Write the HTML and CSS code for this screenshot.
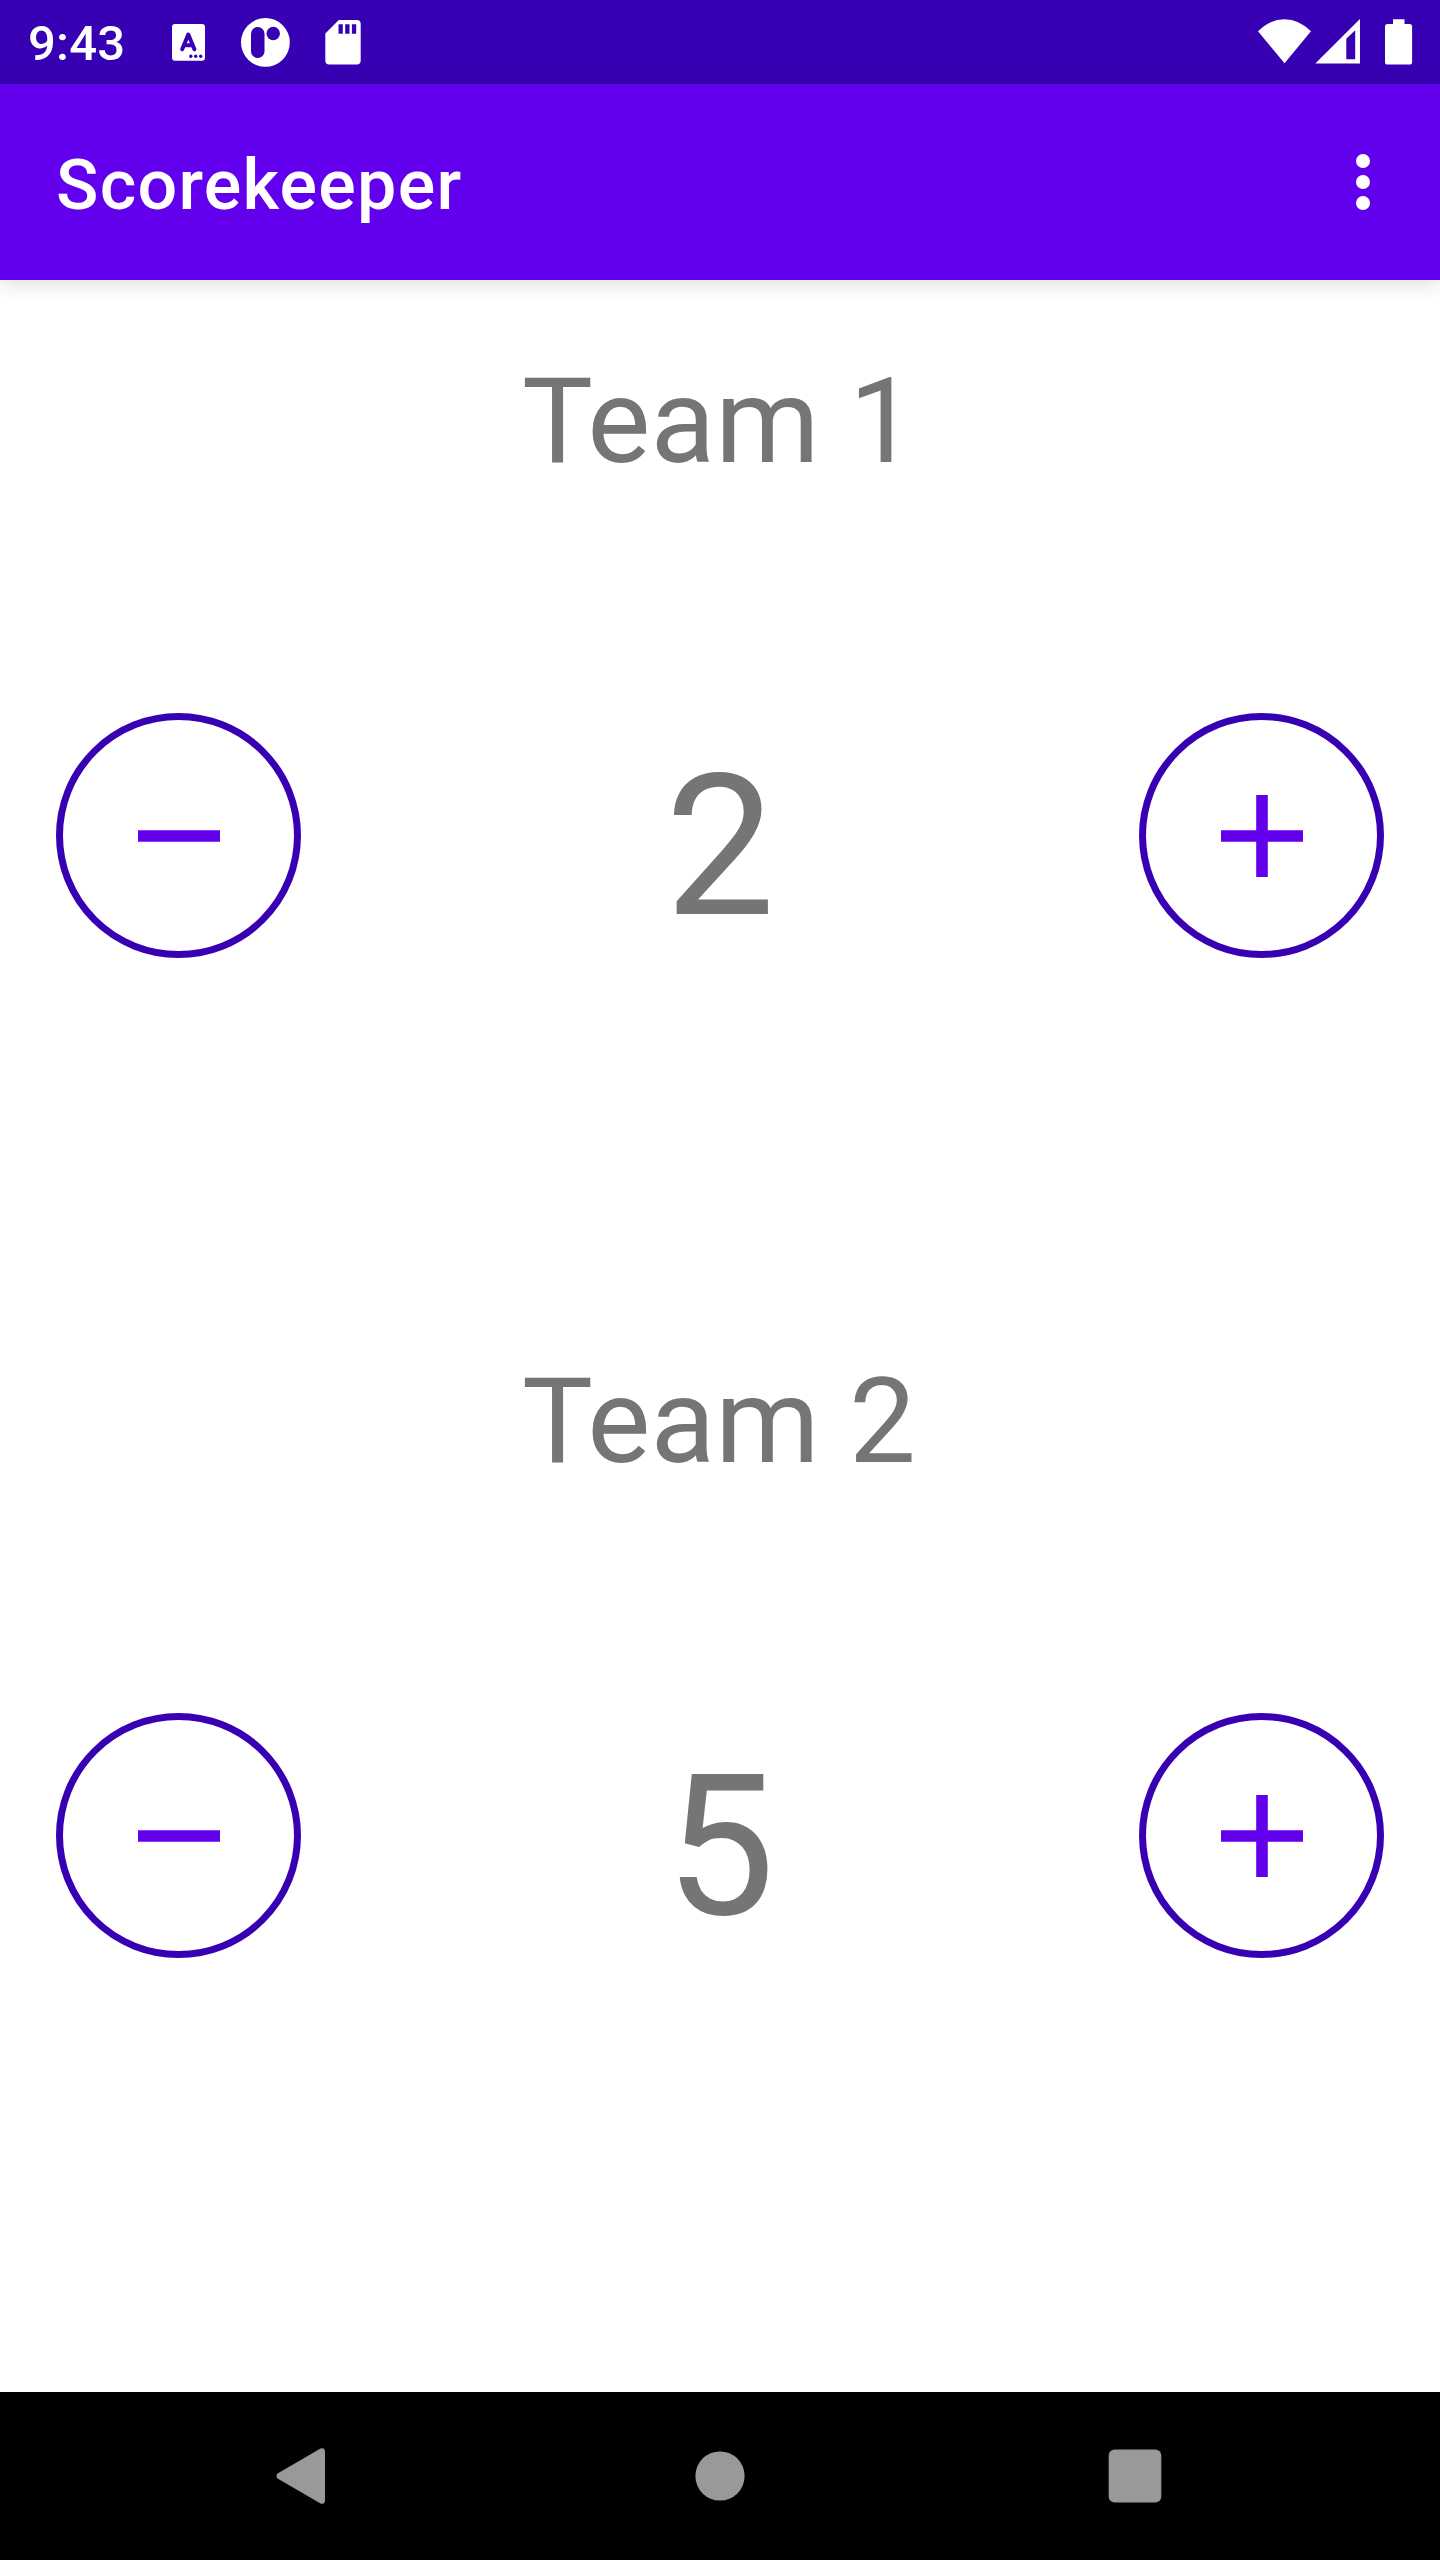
FILE: index.html
```html
<!DOCTYPE html>
<html lang="en">
<head>
<meta charset="utf-8">
<title>Scorekeeper</title>
<link rel="stylesheet" href="styles.css">
</head>
<body>
<div class="screen">
  <div class="status-bar">
    <span class="clock">9:43</span>
    <div class="notifications">
      <svg width="34" height="38" viewBox="171 23 34 38">
        <rect x="172" y="24" width="33" height="36.7" rx="3" fill="#fff"/>
        <path d="M182.2 49.3L188.3 34.5L194.4 49.3M184.5 45.2h7.6" fill="none" stroke="#3700b3" stroke-width="4" stroke-linecap="round" stroke-linejoin="round"/>
        <g fill="#3700b3"><circle cx="190.8" cy="56.3" r="1.7"/><circle cx="195.7" cy="56.3" r="1.7"/><circle cx="200.7" cy="56.3" r="1.7"/></g>
      </svg>
      <svg width="50" height="50" viewBox="240 17 50 50">
        <circle cx="265.4" cy="42.4" r="24.4" fill="#fff"/>
        <rect x="251" y="27" width="13.5" height="31" rx="6.7" fill="#3700b3"/>
        <circle cx="273.2" cy="33.5" r="6.7" fill="#3700b3"/>
      </svg>
      <svg width="36" height="46" viewBox="324.5 19 36 46">
        <path d="M338.3 20H356.2a4 4 0 0 1 4 4V60.6a4 4 0 0 1-4 4H328.8a4 4 0 0 1-4-4V33.5Z" fill="#fff"/>
        <path d="M338 24.3h4.3v9.5H338ZM344.7 24.3h4.3v9.5h-4.3ZM351.4 24.3h4.3v9.5h-4.3Z" fill="#3700b3"/>
      </svg>
    </div>
    <div class="system-icons">
      <svg width="54" height="46" viewBox="1257 18 54 46">
        <path d="M1258 31.3Q1270 19.2 1284.5 19.2T1311 31.3L1284.5 63.2Z" fill="#fff"/>
      </svg>
      <svg width="46" height="46" viewBox="1314 18 46 46">
        <path d="M1315.3 63.6L1360 19V63.6ZM1346.3 38.7V59.2H1355.2V30.3Z" fill="#fff" fill-rule="evenodd"/>
      </svg>
      <svg class="battery" width="28" height="47" viewBox="1385 18 28 47">
        <path d="M1393 19.2H1404.5V24H1409.5a2.6 2.6 0 0 1 2.6 2.6V62a2.6 2.6 0 0 1-2.6 2.6H1387.6a2.6 2.6 0 0 1-2.6-2.6V26.6a2.6 2.6 0 0 1 2.6-2.6H1393Z" fill="#fff"/>
      </svg>
    </div>
  </div>

  <header class="app-bar">
    <h1 class="title">Scorekeeper</h1>
    <svg class="overflow" width="14" height="56" viewBox="0 0 14 56" fill="#fff">
      <circle cx="7" cy="7" r="7"/><circle cx="7" cy="28" r="7"/><circle cx="7" cy="49" r="7"/>
    </svg>
  </header>

  <main class="content">
    <section class="team">
      <h2 class="team-name">Team 1</h2>
      <div class="score-row">
        <button class="round-button" aria-label="Decrease score">
          <svg width="84" height="84" viewBox="0 0 84 84"><path d="M1 36.2h82v11.6H1Z" fill="#6200ee"/></svg>
        </button>
        <span class="score">2</span>
        <button class="round-button" aria-label="Increase score">
          <svg width="84" height="84" viewBox="0 0 84 84"><path d="M1 36.2h35.2V1h11.6v35.2H83v11.6H47.8V83H36.2V47.8H1Z" fill="#6200ee"/></svg>
        </button>
      </div>
    </section>
    <section class="team">
      <h2 class="team-name">Team 2</h2>
      <div class="score-row">
        <button class="round-button" aria-label="Decrease score">
          <svg width="84" height="84" viewBox="0 0 84 84"><path d="M1 36.2h82v11.6H1Z" fill="#6200ee"/></svg>
        </button>
        <span class="score">5</span>
        <button class="round-button" aria-label="Increase score">
          <svg width="84" height="84" viewBox="0 0 84 84"><path d="M1 36.2h35.2V1h11.6v35.2H83v11.6H47.8V83H36.2V47.8H1Z" fill="#6200ee"/></svg>
        </button>
      </div>
    </section>
  </main>

  <nav class="nav-bar">
    <svg width="50" height="58" viewBox="0 0 50 58"><path d="M2 26.2L44.5 1.6Q49 0 49 5V53Q49 58 44.5 56.4L2 31.8Q-1.2 29 2 26.2Z" fill="#999"/></svg>
    <svg class="home" width="50" height="50" viewBox="0 0 50 50"><circle cx="25" cy="25" r="24.6" fill="#999"/></svg>
    <svg width="54" height="54" viewBox="0 0 54 54"><rect x="0.7" y="0.6" width="52.6" height="52.8" rx="6" fill="#999"/></svg>
  </nav>
</div>
</body>
</html>
```
FILE: styles.css
```css
* {
  box-sizing: border-box;
}

body {
  margin: 0;
  font-family: Roboto, sans-serif;
  background: #fff;
}

svg {
  display: block;
}

.screen {
  display: flex;
  flex-direction: column;
  width: 1440px;
  height: 2560px;
  overflow: hidden;
}

.status-bar {
  display: flex;
  flex: none;
  height: 84px;
  padding: 0 27px 0 28px;
  background: #3700b3;
  color: #fff;
}

.clock {
  width: 143px;
  padding-top: 15px;
  font-size: 49px;
  font-weight: 500;
  line-height: 57px;
  letter-spacing: 0.2px;
}

.notifications {
  display: flex;
  gap: 35px;
  align-items: flex-start;
  padding-top: 17px;
}

.notifications svg:first-child {
  margin-top: 6px;
}

.notifications svg:last-child {
  margin-top: 2px;
}

.system-icons {
  display: flex;
  gap: 3px;
  margin-left: auto;
  padding-top: 18px;
}

.battery {
  margin-left: 22px;
}

.app-bar {
  display: flex;
  flex: none;
  justify-content: space-between;
  height: 196px;
  padding: 0 70px 0 56px;
  background: #6200ee;
  box-shadow: 0 4px 18px rgba(0, 0, 0, 0.14);
  color: #fff;
}

.title {
  margin: 60px 0 0;
  font-size: 70px;
  font-weight: 500;
  line-height: 82px;
  letter-spacing: 0.018em;
}

.overflow {
  margin-top: 70px;
}

.content {
  display: flex;
  flex: 1;
  flex-direction: column;
  padding: 56px;
}

.team {
  display: grid;
  flex: 1;
  grid-template: 1fr / 1fr;
  color: #757575;
}

.team-name,
.score-row {
  grid-area: 1 / 1;
}

.team-name {
  margin: 16px 2px 0 0;
  font-size: 119px;
  font-weight: 400;
  line-height: 140px;
  text-align: center;
}

.score-row {
  display: flex;
  align-items: center;
  justify-content: space-between;
  padding-bottom: 1px;
}

.round-button {
  display: flex;
  align-items: center;
  justify-content: center;
  width: 245px;
  height: 245px;
  padding: 1px 0 0 1px;
  border: 7px solid #3700b3;
  border-radius: 50%;
  background: none;
}

.score {
  padding-top: 22px;
  font-size: 196px;
  line-height: 230px;
}

.nav-bar {
  display: flex;
  flex: none;
  align-items: center;
  justify-content: space-between;
  height: 168px;
  padding: 0 278px 0 276px;
  background: #000;
}

.home {
  margin-left: 6px;
}
```
